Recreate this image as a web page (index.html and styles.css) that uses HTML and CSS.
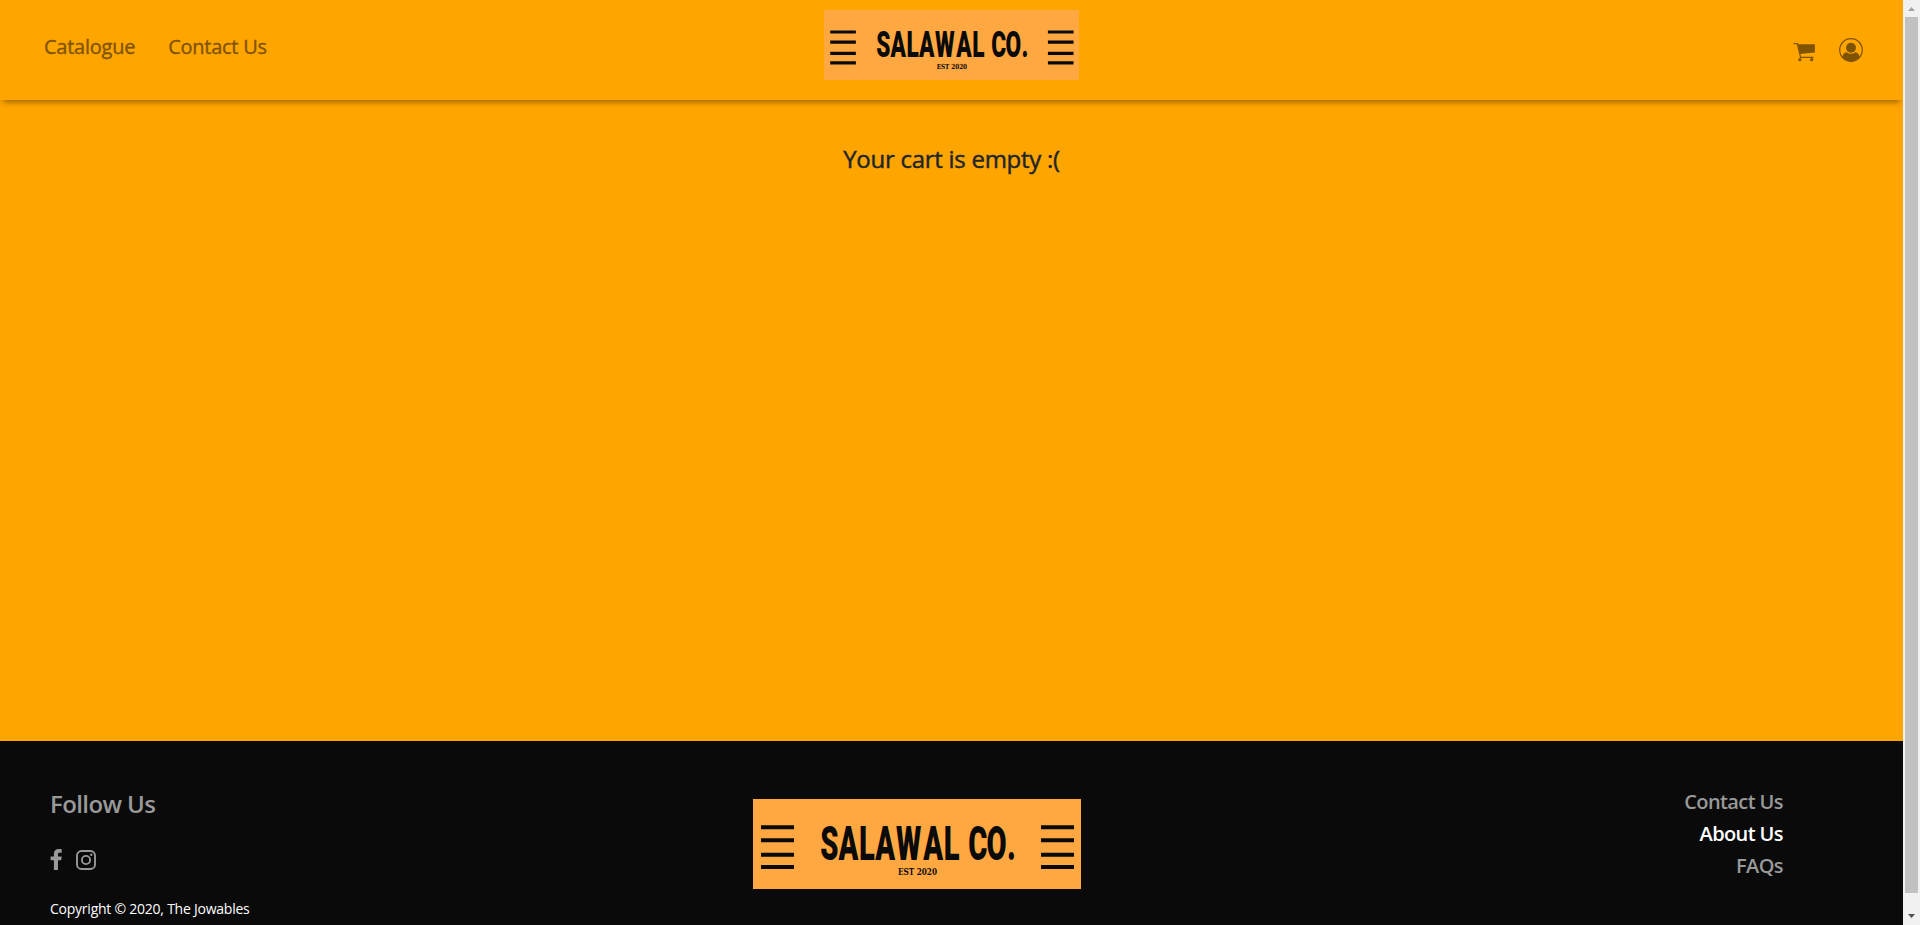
FILE: index.html
```html
<!DOCTYPE html>
<html lang="en">
<head>
<meta charset="utf-8">
<title>Salawal Co. - Cart</title>
<link rel="stylesheet" href="styles.css">
</head>
<body>
<div class="window">
  <div class="page">
    <header class="navbar">
      <nav class="links">
        <a>Catalogue</a>
        <a>Contact Us</a>
      </nav>
      <svg class="brand" viewBox="0 0 328 90" preserveAspectRatio="none">
        <rect width="328" height="90" fill="#ffa842"/>
        <path d="M8 28.200h33M8 41.300h33M8 55.700h33M8 68h33M288 28.200h33M288 41.300h33M288 55.700h33M288 68h33" stroke="#0a0a0a" stroke-width="4"/>
        <text class="logo-name" transform="scale(.6 1)" x="112 142.7 176.8 203.7 238.2 283.7 318 340 358.7 389.2 423.3" y="60.700">SALAWAL CO.</text>
        <text class="logo-est" x="145" y="75.500" textLength="39" lengthAdjust="spacingAndGlyphs">EST 2020</text>
      </svg>
      <div class="actions">
        <svg class="cart" viewBox="0 0 24 20"><path d="M.5 1.200h4l3.400 14.300h13.600" fill="none" stroke="currentColor" stroke-width="1.300"/><path d="M5 2h17.800v8.500L7.400 12.200z"/><circle cx="7.200" cy="18" r="1.700"/><circle cx="19.500" cy="18" r="1.700"/></svg>
        <svg class="user" viewBox="0 0 24 24"><circle cx="12" cy="12" r="11.300" fill="none" stroke="currentColor" stroke-width="1.200"/><circle cx="12" cy="9.700" r="5"/><path d="M3.200 19C3.800 16.200 5.200 14.600 7.600 14.200Q12 17.500 16.400 14.200C18.800 14.600 20.200 16.200 20.800 19Q17.500 23.300 12 23.300T3.200 19z"/></svg>
      </div>
    </header>
    <main class="content">
      <h4 class="empty">Your cart is empty :(</h4>
    </main>
    <footer class="footer">
      <section class="follow">
        <h4 class="follow-title">Follow Us</h4>
        <div class="social">
          <svg class="facebook" viewBox="0 0 12 21"><path d="M11.700.2v3.500H9.600C8.200 3.700 8 4.300 8 5.200v2.300h3.700l-.5 3.700H8V21H3.900v-9.800H.6V7.500h3.300V4.800C3.900 1.700 5.800 0 8.700 0c1.300 0 2.700.1 3 .2z"/></svg>
          <svg class="instagram" viewBox="0 0 20 20"><rect x="1" y="1" width="18" height="18" rx="4.500" fill="none" stroke="currentColor" stroke-width="1.900"/><circle cx="10" cy="10" r="4.100" fill="none" stroke="currentColor" stroke-width="1.900"/><circle cx="15.300" cy="4.700" r="1.200"/></svg>
        </div>
        <p class="copyright">Copyright © 2020, The Jowables</p>
      </section>
      <svg class="footer-logo" viewBox="0 0 328 90">
        <rect width="328" height="90" fill="#ffa842"/>
        <path d="M8 28.200h33M8 41.300h33M8 55.700h33M8 68h33M288 28.200h33M288 41.300h33M288 55.700h33M288 68h33" stroke="#0a0a0a" stroke-width="4"/>
        <text class="logo-name" transform="scale(.6 1)" x="112 142.7 176.8 203.7 238.2 283.7 318 340 358.7 389.2 423.3" y="60.700">SALAWAL CO.</text>
        <text class="logo-est" x="145" y="75.500" textLength="39" lengthAdjust="spacingAndGlyphs">EST 2020</text>
      </svg>
      <nav class="footer-links">
        <a>Contact Us</a>
        <a class="active">About Us</a>
        <a>FAQs</a>
      </nav>
    </footer>
  </div>
  <div class="scrollbar">
    <svg class="arrow up" viewBox="0 0 7 4"><path d="M0 4L3.500 0L7 4z"/></svg>
    <div class="thumb"></div>
    <svg class="arrow down" viewBox="0 0 7 4"><path d="M0 0L3.500 4L7 0z"/></svg>
  </div>
</div>
</body>
</html>
```
FILE: styles.css
```css
* { box-sizing: border-box; }
body { margin: 0; overflow: hidden; font-family: "Open Sans", "Noto Sans", sans-serif; }
h4, p { margin: 0; }
svg { display: block; fill: currentColor; flex: none; }
.window { display: flex; width: 1920px; height: 925px; }
.page { display: flex; flex-direction: column; width: 1903px; background: #ffa500; }
.navbar { display: grid; grid-template-columns: 780px 255px 1fr; height: 100px; padding: 0 40px 0 44px; color: #805300; box-shadow: 0 5px 6px -3px rgba(0, 0, 0, .4); }
.links { display: flex; gap: 33px; padding-top: 33px; font-size: 20px; line-height: 28px; letter-spacing: -.25px; white-space: nowrap; -webkit-text-stroke: .35px; }
.brand { width: 255px; height: 70px; margin-top: 10px; }
.actions { display: flex; justify-content: flex-end; gap: 23px; padding-top: 38px; }
.cart { width: 23px; height: 20px; margin-top: 4px; }
.user { width: 24px; height: 24px; }
.content { flex: 1; padding-top: 43px; }
.empty { color: #212529; font-size: 24px; line-height: 32px; font-weight: 400; letter-spacing: -.27px; text-align: center; -webkit-text-stroke: .45px; }
.footer { display: flex; height: 184px; background: #0a0a0a; color: #999; }
.follow { width: 753px; padding: 47px 0 0 50px; }
.follow-title { font-size: 24px; line-height: 32px; font-weight: 600; letter-spacing: -.6px; }
.social { display: flex; gap: 14px; height: 21px; margin-top: 29px; }
.facebook { width: 12px; height: 21px; }
.instagram { width: 20px; height: 20px; margin-top: 1px; }
.copyright { margin-top: 29px; color: #fff; font-size: 14px; line-height: 20px; letter-spacing: -.24px; }
.footer-logo { width: 328px; height: 90px; margin-top: 58px; }
.footer-links { display: flex; flex: 1; flex-direction: column; align-items: flex-end; padding: 45px 120px 0 0; font-size: 20px; line-height: 32px; font-weight: 600; letter-spacing: -.6px; }
.footer-links .active { color: #fff; }
.logo-name { font: 900 48.500px Roboto, sans-serif; fill: #0a0a0a; }
.logo-est { font: bold 9px "DejaVu Serif", serif; fill: #0a0a0a; }
.scrollbar { display: flex; flex-direction: column; align-items: center; width: 17px; background: #f1f1f1; }
.thumb { width: 13px; height: 876px; margin-top: 6px; background: #c1c1c1; }
.arrow { width: 7px; height: 4px; }
.up { margin-top: 7px; color: #a3a3a3; }
.down { margin-top: 21px; color: #505050; }
```
